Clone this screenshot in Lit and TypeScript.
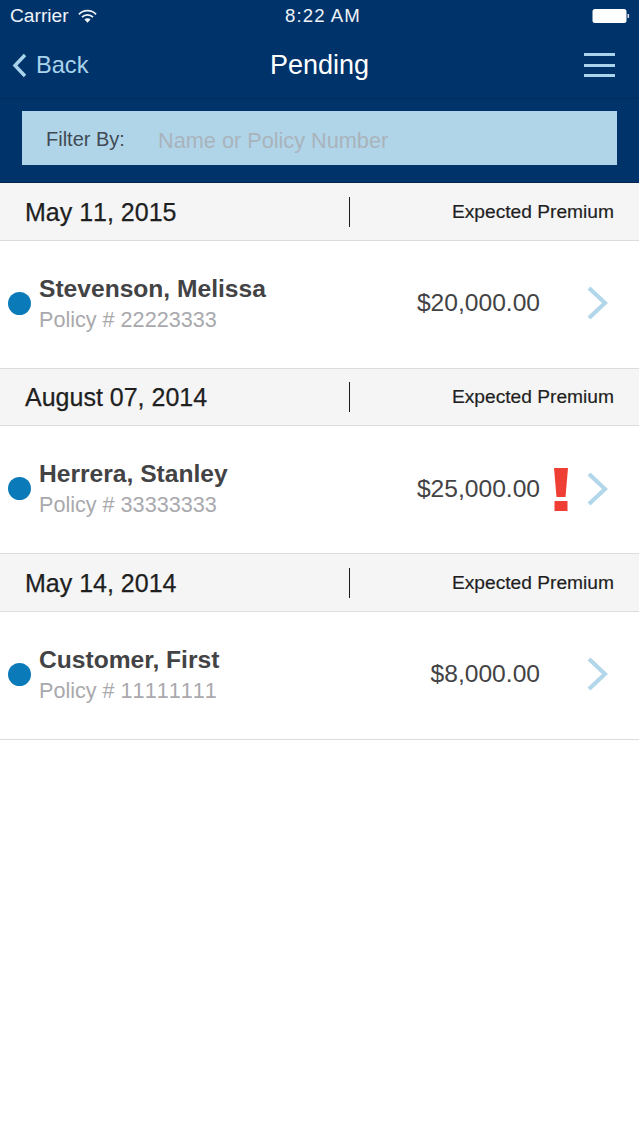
import { LitElement, html, css, svg } from "lit";
import { customElement } from "lit/decorators.js";

const groups = [
  { date: "May 11, 2015", name: "Stevenson, Melissa", policy: "Policy # 22223333", amount: "$20,000.00", alert: false },
  { date: "August 07, 2014", name: "Herrera, Stanley", policy: "Policy # 33333333", amount: "$25,000.00", alert: true },
  { date: "May 14, 2014", name: "Customer, First", policy: "Policy # 11111111", amount: "$8,000.00", alert: false },
];

@customElement("app-root")
export class AppRoot extends LitElement {
  static styles = css`
    :host { display: block; width: 639px; height: 1136px; background: #fff; font-family: "Liberation Sans", Arial, sans-serif; overflow: hidden; }
    .top { background: #00336a; height: 183px; border-bottom: 1px solid #00264f; box-sizing: border-box; display: flex; flex-direction: column; }
    .status { height: 32px; display: grid; grid-template-columns: 1fr auto 1fr; align-items: center; padding: 0 9px 0 10px; color: #eef3f8; font-size: 19.2px; }
    .status .l { display: flex; align-items: center; gap: 9px; }
    .status .t { font-size: 18.6px; letter-spacing: 1.1px; margin-left: 6px; }
    .status .r { display: flex; justify-content: flex-end; }
    .nav { height: 67px; display: grid; grid-template-columns: 1fr auto 1fr; align-items: center; border-bottom: 1px solid #002b5a; padding: 0 24px; box-sizing: border-box; }
    .back { display: flex; align-items: center; gap: 9px; color: #a9d4ec; font-size: 23.6px; margin-left: -12px; }
    .title { color: #fff; font-size: 27px; }
    .menu { display: flex; flex-direction: column; gap: 7.5px; justify-self: end; width: 31px; }
    .menu i { display: block; height: 3px; background: #a9d4ec; }
    .filter { margin: 12px 22px 0 22px; height: 54px; background: #b1d5e8; display: flex; align-items: center; padding-left: 24px; font-size: 20px; }
    .filter .lbl { color: #3f4a55; width: 112px; margin-top: 2px; }
    .filter .ph { color: #a9b3bc; font-size: 21.7px; margin-top: 6px; }
    .head { height: 55.5px; padding-top: 1px; background: #f5f5f6; border-bottom: 1px solid #dcdcdd; display: grid; grid-template-columns: 350px 1fr; align-items: center; padding-right: 25px; }
    .date { padding-left: 25px; font-size: 25px; font-kerning: none; color: #1f1f1f; border-right: 1.5px solid #1a1a1a; height: 30px; line-height: 30px; box-sizing: border-box; -webkit-text-stroke: .25px #1f1f1f; }
    .prem { text-align: right; font-size: 19.2px; color: #1f1f1f; -webkit-text-stroke: .2px #1f1f1f; }
    .row { height: 127px; border-bottom: 1px solid #dcdcdd; display: flex; align-items: center; }
    .inner { display: flex; align-items: center; width: 100%; padding: 0 0 2px 8px; box-sizing: border-box; }
    .dot { width: 23px; height: 23px; border-radius: 50%; background: #0b7ab8; margin-right: 8px; flex: none; }
    .who { flex: 1; margin-top: 2px; }
    .name { font-size: 24.6px; font-weight: 700; color: #434345; line-height: 30px; }
    .policy { font-size: 21.6px; font-kerning: none; color: #a9a9ad; line-height: 30px; margin-top: 1px; }
    .amt { font-size: 24.6px; color: #434345; text-align: right; }
    .slot { width: 37px; flex: none; display: flex; align-items: center; justify-content: center; padding-left: 4px; box-sizing: border-box; }
    .slot svg { margin-top: 2px; }
    .chev { width: 31px; flex: none; margin-right: 31px; display: flex; justify-content: flex-end; }
  `;

  render() {
    return html`
      <div class="top">
        <div class="status">
          <div class="l"><span>Carrier</span>
            <svg width="19" height="15" viewBox="0 0 20 15"><path d="M1 5.2a12.6 12.6 0 0 1 18 0" fill="none" stroke="#eef3f8" stroke-width="1.9"/><path d="M4.2 8.2a8.2 8.2 0 0 1 11.6 0" fill="none" stroke="#eef3f8" stroke-width="1.9"/><path d="M6.8 10.6a4.4 4.4 0 0 1 6.4 0L10 14z" fill="#eef3f8"/></svg>
          </div>
          <div class="t">8:22 AM</div>
          <div class="r">
            <svg width="38" height="16" viewBox="0 0 38 16"><rect x="0.5" y="1" width="34" height="14" rx="2.5" fill="#fff"/><rect x="35.5" y="6" width="1.6" height="4" fill="#cfd9e4"/></svg>
          </div>
        </div>
        <div class="nav">
          <div class="back">
            <svg width="15" height="25" viewBox="0 0 15 25"><path d="M13 2 3 12.5 13 23" fill="none" stroke="#a9d4ec" stroke-width="3.4"/></svg>
            <span>Back</span>
          </div>
          <div class="title">Pending</div>
          <div class="menu"><i></i><i></i><i></i></div>
        </div>
        <div class="filter"><span class="lbl">Filter By:</span><span class="ph">Name or Policy Number</span></div>
      </div>
      ${groups.map(g => html`
        <div class="head"><div class="date">${g.date}</div><div class="prem">Expected Premium</div></div>
        <div class="row"><div class="inner">
          <div class="dot"></div>
          <div class="who"><div class="name">${g.name}</div><div class="policy">${g.policy}</div></div>
          <div class="amt">${g.amount}</div>
          <div class="slot">${g.alert ? svg`<svg width="16" height="44" viewBox="0 0 16 44"><path d="M1 0h14l-2.5 29h-9z" fill="#ef3e33"/><rect x="1.5" y="33" width="13" height="10" fill="#ef3e33"/></svg>` : ""}</div>
          <div class="chev"><svg width="21" height="34" viewBox="0 0 21 34"><path d="M2 2 18 17 2 32" fill="none" stroke="#b3d7ea" stroke-width="4.2"/></svg></div>
        </div></div>
      `)}
    `;
  }
}
